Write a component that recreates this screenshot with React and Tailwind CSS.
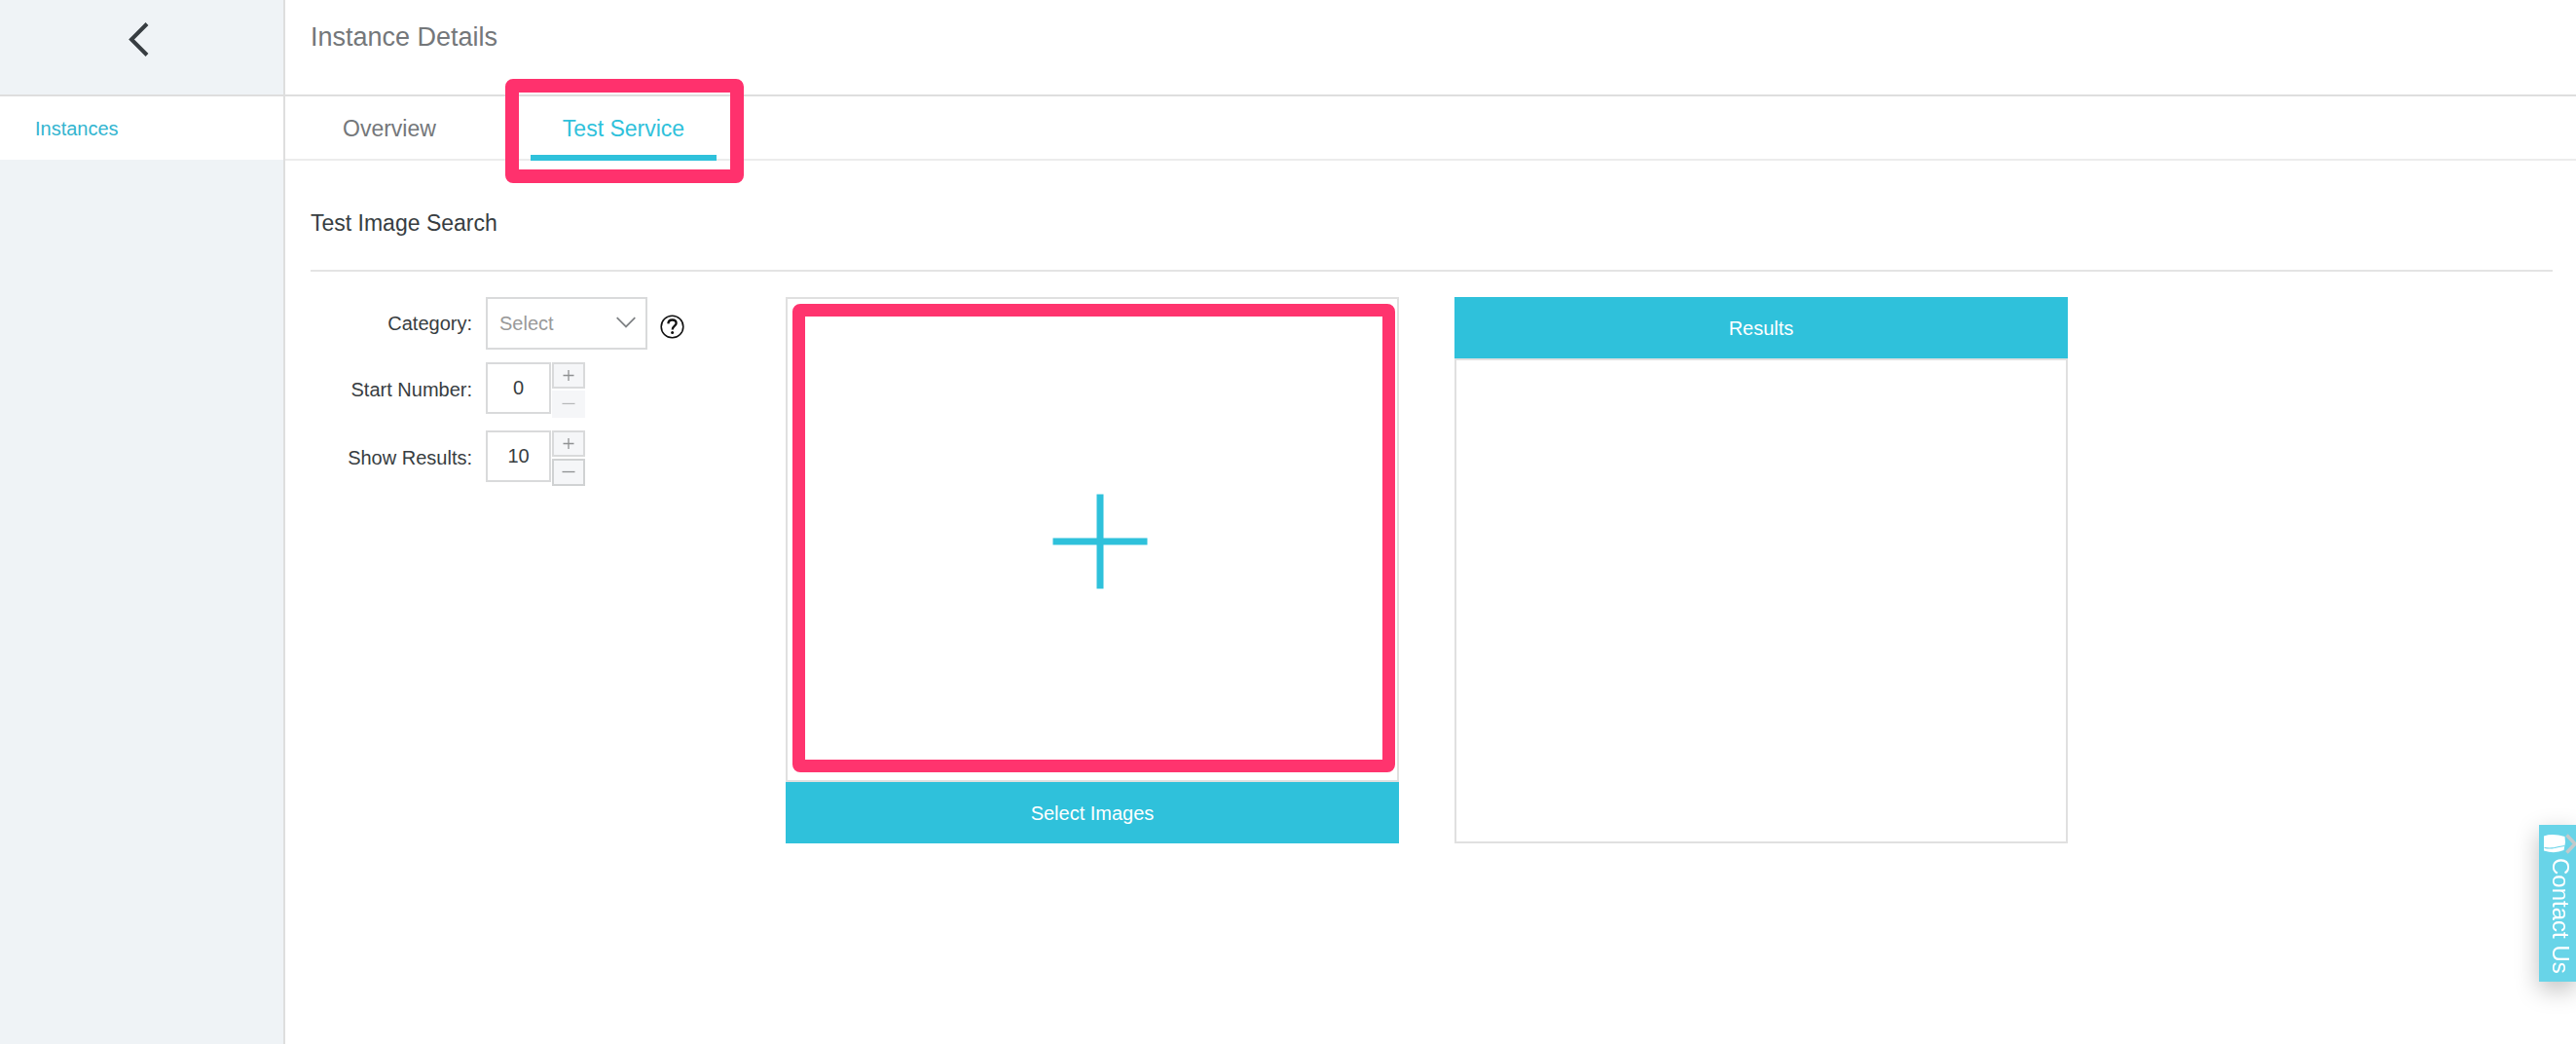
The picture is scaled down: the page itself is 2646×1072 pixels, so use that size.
import { useState } from "react";

function StepIcon({ plus }) {
  return (
    <svg width="14" height="14" viewBox="0 0 14 14" stroke="currentColor" strokeWidth="1.3" aria-hidden="true">
      <path d={plus ? "M1.5 6.5H12.5M7 1V12" : "M0.5 6.5H13.5"} />
    </svg>
  );
}

function NumberField({ id, label, initial }) {
  const [value, setValue] = useState(initial);
  const atMin = value <= 0;
  return (
    <div className="flex items-start">
      <label htmlFor={id} className="w-[180px] pr-[14px] text-right leading-[56px]">
        {label}
      </label>
      <input
        id={id}
        type="text"
        inputMode="numeric"
        value={value}
        onChange={(e) => setValue(Number(e.target.value) || 0)}
        className="h-[53px] w-[67px] border-2 border-[#d9dadb] bg-white text-center outline-none"
      />
      <div className="ml-px flex flex-col gap-0.5 text-[#8f9192]">
        <button
          type="button"
          aria-label={"Increase " + label}
          onClick={() => setValue(value + 1)}
          className="flex h-[27px] w-[34px] items-center justify-center border-2 border-[#d9dadb] bg-[#f5f6f8]"
        >
          <StepIcon plus />
        </button>
        <button
          type="button"
          aria-label={"Decrease " + label}
          disabled={atMin}
          onClick={() => setValue(value - 1)}
          className="flex h-7 w-[34px] items-center justify-center border-2 border-[#d0d2d3] bg-[#f5f6f8] disabled:border-[#f5f6f8] disabled:text-[#b8babb]"
        >
          <StepIcon />
        </button>
      </div>
    </div>
  );
}

function Sidebar() {
  return (
    <aside className="w-[293px] shrink-0 border-r-2 border-[#dedede] bg-[#eff3f6]">
      <div className="h-[99px] border-b-2 border-[#dedede] pt-[21px] pl-[130px]">
        <button type="button" aria-label="Back" className="block">
          <svg width="24" height="38" viewBox="0 0 24 38" fill="none" stroke="#373d41" strokeWidth="4">
            <path d="M21 3.5L5 19.5L21 35.5" />
          </svg>
        </button>
      </div>
      <nav>
        <a href="#instances" className="flex h-[65px] items-center bg-white pl-9 text-[20px] text-[#33b5d0]">
          Instances
        </a>
      </nav>
    </aside>
  );
}

function Tabs() {
  return (
    <nav className="flex h-[66px] gap-16 border-b-2 border-[#ececec] pl-[26px] text-[23px]">
      <a href="#overview" className="flex h-[66px] items-center px-[33px] text-[#74777a]">
        Overview
      </a>
      <a href="#test" className="relative flex h-[66px] items-center px-[33px] text-[#2fc1db]">
        Test Service
        <span className="absolute inset-x-0 bottom-0 h-[6px] bg-[#2fc1db]" />
        <span className="pointer-events-none absolute -top-[18px] -right-7 -bottom-[23px] -left-[26px] rounded-lg border-[14px] border-[#ff316d]" />
      </a>
    </nav>
  );
}

function SearchForm() {
  return (
    <form className="flex w-[488px] shrink-0 flex-col gap-[13px]">
      <div className="flex items-start">
        <label htmlFor="category" className="w-[180px] pr-[14px] text-right leading-[54px]">
          Category:
        </label>
        <div className="relative">
          <select
            id="category"
            className="h-[54px] w-[166px] appearance-none border-2 border-[#d9dadb] bg-white pr-9 pl-3 text-[#999999] outline-none"
          >
            <option>Select</option>
          </select>
          <svg
            className="pointer-events-none absolute top-5 right-3"
            width="20"
            height="13"
            viewBox="0 0 20 13"
            fill="none"
            stroke="#808386"
            strokeWidth="1.8"
          >
            <path d="M0.7 1.2L10 10.500L19.3 1.2" />
          </svg>
        </div>
        <button type="button" aria-label="Category help" className="mt-[18px] ml-[13px]">
          <svg width="25" height="25" viewBox="0 0 25 25" fill="none" stroke="#111111">
            <circle cx="12.5" cy="12.5" r="11.3" strokeWidth="1.6" />
            <path
              d="M8.4 9.400C8.5 6.7 10.2 5.5 12.6 5.5C15 5.5 16.6 6.8 16.6 9C16.6 11.7 12.7 11.800 12.7 15.5"
              strokeWidth="2.3"
            />
            <circle cx="12.6" cy="18.6" r="1.5" fill="#111111" stroke="none" />
          </svg>
        </button>
      </div>
      <NumberField id="start-number" label="Start Number:" initial={0} />
      <NumberField id="show-results" label="Show Results:" initial={10} />
    </form>
  );
}

function UploadPanel() {
  return (
    <section className="flex max-w-[630px] flex-1 flex-col">
      <button
        type="button"
        aria-label="Add image"
        className="relative flex h-[498px] items-center justify-center border-2 border-[#e0e0e0] pt-1 pl-4"
      >
        <svg width="98" height="98" viewBox="0 0 98 98" stroke="#2fc1db" strokeWidth="7">
          <path d="M0.5 49H97.5M49 0.5V97.5" />
        </svg>
        <span className="pointer-events-none absolute top-[5px] right-0.5 bottom-2 left-[5px] rounded-lg border-[13px] border-[#ff346e]" />
      </button>
      <button type="button" className="h-[63px] bg-[#2fc1db] text-white">
        Select Images
      </button>
    </section>
  );
}

function ResultsPanel() {
  return (
    <section className="flex max-w-[630px] flex-1 flex-col">
      <h3 className="flex h-[63px] items-center justify-center bg-[#2fc1db] text-white">Results</h3>
      <div className="flex-1 border-2 border-[#e0e0e0]" />
    </section>
  );
}

function ContactTab() {
  return (
    <button
      type="button"
      className="fixed right-0 bottom-16 flex h-[161px] w-[38px] flex-col items-start bg-[#68d4e8] pt-[9px] text-white shadow-[0_8px_24px_rgba(0,0,0,0.25)]"
    >
      <svg width="38" height="22" viewBox="0 0 38 22" fill="none" aria-hidden="true">
        <path d="M28.500 1.500L37 10.500L28.500 19.500" stroke="#c4c9cb" strokeWidth="3.5" />
        <path d="M5 2.5Q14 -0.5 26.500 3L27 9L25.500 17Q16 21 5 17.500Z" fill="#ffffff" />
        <path d="M5.500 14.500Q11 15.500 16 14.500Q20 13.500 26.500 12.500" stroke="#68d4e8" strokeWidth="1.1" />
      </svg>
      <span className="mt-[3px] ml-[7px] text-[24px] leading-[30px] whitespace-nowrap [writing-mode:vertical-rl]">
        Contact Us
      </span>
    </button>
  );
}

export default function App() {
  return (
    <div className="flex min-h-screen bg-white font-['Liberation_Sans',Arial,sans-serif] text-[20px] text-[#373d41]">
      <Sidebar />
      <main className="min-w-0 flex-1">
        <header className="h-[99px] border-b-2 border-[#dedede] pt-[22px] pl-[26px]">
          <h1 className="text-[27px] leading-8 text-[#74777a]">Instance Details</h1>
        </header>
        <Tabs />
        <div className="pr-6 pl-[26px]">
          <h2 className="border-b-2 border-[#e4e4e4] pt-12 pb-8 text-[23px] leading-8">Test Image Search</h2>
          <div className="flex pt-[26px]">
            <SearchForm />
            <div className="flex flex-1 gap-[57px]">
              <UploadPanel />
              <ResultsPanel />
            </div>
          </div>
        </div>
      </main>
      <ContactTab />
    </div>
  );
}
